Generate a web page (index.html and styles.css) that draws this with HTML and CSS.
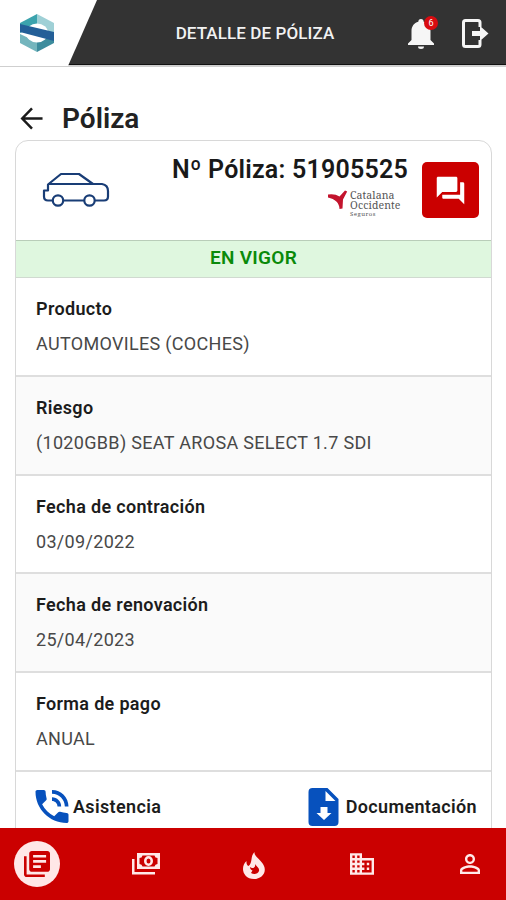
FILE: index.html
```html
<!DOCTYPE html>
<html lang="es">
<head>
<meta charset="utf-8">
<title>Detalle de póliza</title>
<link rel="stylesheet" href="styles.css">
</head>
<body>
<div class="app">
  <header class="topbar">
    <div class="brand">
      <svg class="logo" viewBox="0 0 34 38">
        <path fill="#3ba3ad" d="M17 0 0 9v10l17-7z"/>
        <path fill="#9fd0d6" d="M17 0l17 9v11L17 12z"/>
        <path fill="#74b5bd" d="M0 20l17 8v10L0 29z"/>
        <path fill="#3d8c9d" d="M34 19v10l-17 9V27z"/>
        <ellipse cx="17" cy="19" rx="11" ry="9.500" fill="#fff"/>
        <path fill="#235f98" d="M0 10l34 8v9L0 18z"/>
      </svg>
    </div>
    <h1 class="bar-title">DETALLE DE PÓLIZA</h1>
    <div class="bar-actions">
      <div class="bell">
        <svg viewBox="0 0 26 30"><path fill="#f6f6f6" d="M13 0c-1.700 0-2.700 1.200-2.700 2.800C6 4 3.500 7.500 3.500 12v9L0 24.500V26h26v-1.500L22.500 21v-9c0-4.500-2.500-8-6.800-9.200C15.700 1.200 14.700 0 13 0zM10 27.500h6a3 2.500 0 0 1-6 0z"/></svg>
        <span class="badge">6</span>
      </div>
      <svg class="exit" viewBox="0 0 27 29"><path fill="none" stroke="#f6f6f6" stroke-width="3" stroke-linejoin="round" d="M18 8V3.500Q18 1.500 16 1.500H3.500Q1.500 1.500 1.500 3.500v22q0 2 2 2H16q2 0 2-2V21"/><path fill="#f6f6f6" d="M10 12h8V7l8.500 7.500L18 22v-5h-8z"/></svg>
    </div>
  </header>

  <main class="content">
    <div class="heading">
      <svg class="back" viewBox="0 0 24 24"><path fill="none" stroke="#1b1b1b" stroke-width="2.600" d="M23 12H2M12 1.500 1.800 12 12 22.500"/></svg>
      <h2>Póliza</h2>
    </div>
    <section class="card">
      <div class="summary">
        <svg class="car" viewBox="0 0 68 36"><g fill="none" stroke="#193d76" stroke-width="2.200" stroke-linejoin="round"><path d="M11 28.500H6q-4 0-4-4v-6h4v-6L19 2h18l14 10h9q6 1 6 7v5.500q0 4-4 4h-9M21 28.500h22M6 12h46"/><circle cx="16" cy="28.500" r="5.200"/><circle cx="47.500" cy="28.500" r="5.200"/></g></svg>
        <div class="policy">
          <div class="number">Nº Póliza: 51905525</div>
          <div class="insurer">
            <svg viewBox="0 0 20 20"><path fill="#c3142d" d="M0 4.500q7-1 11.500 2L17 .5l2.200 1L15 9.500l-.5 9-3 .5C11.500 13 7 9 0 7.500z"/></svg>
            <div class="insurer-name"><span>Catalana</span><span>Occidente</span><small>Seguros</small></div>
          </div>
        </div>
        <div class="chat"><svg viewBox="0 0 24 24"><path fill="#fff" d="M21 6h-2v9H6v2c0 .55.45 1 1 1h11l4 4V7c0-.55-.45-1-1-1zm-4 6V3c0-.55-.45-1-1-1H3c-.55 0-1 .45-1 1v14l4-4h10c.55 0 1-.45 1-1z"/></svg></div>
      </div>
      <div class="status">EN VIGOR</div>
      <dl class="rows">
        <div class="row"><dt>Producto</dt><dd>AUTOMOVILES (COCHES)</dd></div>
        <div class="row"><dt>Riesgo</dt><dd>(1020GBB) SEAT AROSA SELECT 1.7 SDI</dd></div>
        <div class="row"><dt>Fecha de contración</dt><dd>03/09/2022</dd></div>
        <div class="row"><dt>Fecha de renovación</dt><dd>25/04/2023</dd></div>
        <div class="row"><dt>Forma de pago</dt><dd>ANUAL</dd></div>
      </dl>
      <div class="links">
        <div class="link assist"><svg viewBox="3 3 18 18"><path fill="#0751bd" d="M20 15.500c-1.250 0-2.450-.2-3.570-.57-.1-.03-.21-.05-.31-.05-.26 0-.51.1-.71.290l-2.200 2.200c-2.830-1.440-5.150-3.750-6.590-6.590l2.200-2.210c.28-.26.36-.65.25-1C8.700 6.450 8.500 5.250 8.500 4c0-.55-.45-1-1-1H4c-.55 0-1 .45-1 1 0 9.390 7.610 17 17 17 .55 0 1-.45 1-1v-3.500c0-.55-.45-1-1-1zM19 12h2c0-4.970-4.030-9-9-9v2c3.870 0 7 3.130 7 7zm-4 0h2c0-2.760-2.240-5-5-5v2c1.660 0 3 1.340 3 3z"/></svg><span>Asistencia</span></div>
        <div class="link docs"><svg viewBox="0 0 30 38"><path fill="#0751bd" fill-rule="evenodd" d="M4 0h15l11 11v23q0 4-4 4H4q-4 0-4-4V4q0-4 4-4zm13 3v10h10zM12 19v6H8l7.500 7 7.500-7h-4v-6z"/></svg><span>Documentación</span></div>
      </div>
    </section>
  </main>

  <nav class="tabs">
    <div class="tab active"><svg viewBox="2 2 20 20"><path d="M4 6H2v14c0 1.100.9 2 2 2h14v-2H4V6zm16-4H8c-1.100 0-2 .9-2 2v12c0 1.100.9 2 2 2h12c1.100 0 2-.9 2-2V4c0-1.100-.9-2-2-2zm-1 9H9V9h10v2zm-4 4H9v-2h6v2zm4-8H9V5h10v2z"/></svg></div>
    <div class="tab money"><svg viewBox="0 0 28 22"><path fill-rule="evenodd" d="M5 0h23v16H5zM7.500 5v6q2.500 0 3 2.500h12q.5-2.500 3-2.500V5q-2.500 0-3-2.500h-12Q10 5 7.500 5zM0 6h2.500v13H23v2.500H0z"/><path fill-rule="evenodd" d="M16.500 3a4.500 5 0 0 1 0 10 4.500 5 0 0 1 0-10zm0 2.500a2 2.500 0 0 0 0 5 2 2.500 0 0 0 0-5z"/></svg></div>
    <div class="tab fire"><svg viewBox="0 0 22 27"><path fill-rule="evenodd" d="M11.500 0C11 5 19 8 21 14c3 7-3 13-10 13C4 27 0 22 0 17c0-3 1-6 3.500-8-.2 3 .5 4 2 5C10 11 7 4 11.500 0zm.5 12c1 4-3 5-5 3 0 2 1 3 2.500 3.500L8 21c3 2 7 1 8-2 .7-3-2-4-4-7z"/></svg></div>
    <div class="tab building"><svg viewBox="2 3 20 18"><path d="M12 7V3H2v18h20V7H12zM6 19H4v-2h2v2zm0-4H4v-2h2v2zm0-4H4V9h2v2zm0-4H4V5h2v2zm4 12H8v-2h2v2zm0-4H8v-2h2v2zm0-4H8V9h2v2zm0-4H8V5h2v2zm10 12h-8v-2h2v-2h-2v-2h2v-2h-2V9h8v10zm-2-8h-2v2h2v-2zm0 4h-2v2h2v-2z"/></svg></div>
    <div class="tab person"><svg viewBox="4 4 16 16"><path d="M12 5.900a2.100 2.100 0 1 1 0 4.200 2.100 2.100 0 0 1 0-4.200m0 9c2.970 0 6.100 1.460 6.100 2.100v1.100H5.900V17c0-.64 3.130-2.100 6.100-2.100M12 4C9.790 4 8 5.790 8 8s1.790 4 4 4 4-1.790 4-4-1.790-4-4-4zm0 9c-2.670 0-8 1.340-8 4v3h16v-3c0-2.660-5.330-4-8-4z"/></svg></div>
  </nav>
</div>
</body>
</html>
```
FILE: styles.css
```css
* { box-sizing: border-box; }
body { margin: 0; background: #fff; font-family: Roboto, "Liberation Sans", sans-serif; color: #202020; }
h1, h2, dl, dt, dd { margin: 0; }
svg { display: block; flex: none; }
.app { width: 506px; height: 900px; display: flex; flex-direction: column; overflow: hidden; }
.topbar { flex: none; height: 67px; display: grid; grid-template-columns: 97px 1fr 97px; align-items: start; background: #333; border-bottom: 2px solid #cfcfcf; box-shadow: inset 0 -1px #111; }
.brand { height: 66px; background: #fff; clip-path: polygon(0 0, 100% 0, 68px 100%, 0 100%); padding: 14px 0 0 20px; }
.logo { width: 34px; height: 38px; }
.bar-title { text-align: center; font-size: 17px; font-weight: 500; line-height: 67px; color: #f2f2f2; letter-spacing: .1px; padding-left: 4px; }
.bar-actions { display: flex; gap: 28px; padding-top: 19px; margin-left: -1px; }
.bell { position: relative; width: 26px; }
.bell svg { width: 26px; height: 30px; }
.badge { position: absolute; left: 16px; top: -3px; width: 14px; height: 14px; border-radius: 50%; background: #d90b10; color: #fff; font-size: 9px; line-height: 14px; text-align: center; }
.exit { width: 27px; height: 29px; }
.content { flex: 1; min-height: 0; padding: 33px 14px 0 15px; overflow: hidden; }
.heading { display: flex; align-items: center; height: 40px; gap: 18px; padding-left: 5px; }
.back { width: 24px; height: 23px; margin-top: -3px; }
.heading h2 { font-size: 28px; font-weight: 600; line-height: 36px; color: #222; margin-top: -3px; }
.card { border: 1px solid #d8d8d8; border-radius: 13px 13px 0 0; overflow: hidden; }
.summary { display: flex; height: 99px; padding: 0 12px 0 26px; }
.car { width: 68px; height: 36px; margin-top: 31px; }
.policy { flex: 1; display: flex; flex-direction: column; align-items: flex-end; margin-right: 14px; padding-top: 13px; }
.number { font-size: 25px; font-weight: 600; line-height: 32px; white-space: nowrap; color: #191919; letter-spacing: .22px; }
.insurer { display: flex; gap: 2px; margin: 4px 7px 0 0; }
.insurer svg { width: 20px; height: 20px; }
.insurer-name { font-family: "Noto Serif", "DejaVu Serif", "Liberation Serif", serif; color: #555; width: 51px; }
.insurer-name span { display: block; height: 10px; font-size: 10.500px; line-height: 10px; letter-spacing: .1px; }
.insurer-name small { display: block; font-size: 6px; line-height: 8px; letter-spacing: .5px; }
.chat { width: 57px; height: 56px; margin-top: 21px; background: #cb0000; border-radius: 5px; display: grid; place-items: center; }
.chat svg { width: 33px; height: 33px; }
.status { height: 38px; border-top: 1px solid #b9cdb9; border-bottom: 1px solid #d0dad0; background: #dff7df; color: #0a8a0a; font-size: 19px; font-weight: 600; line-height: 34px; text-align: center; letter-spacing: .3px; }
.row { height: 98.800px; padding: 19px 20px 0; border-bottom: 2px solid #dedede; }
.row:nth-child(even) { background: #fafafa; }
dt { font-size: 18px; font-weight: 600; line-height: 24px; letter-spacing: .33px; color: #1c1c1c; }
dd { font-size: 18px; line-height: 24px; margin-top: 11px; letter-spacing: .32px; color: #484848; }
.links { display: flex; justify-content: space-between; height: 60px; padding: 16px 14px 0 19px; }
.link { display: flex; align-items: center; height: 38px; font-size: 18px; font-weight: 600; letter-spacing: .35px; color: #1c1c1c; }
.assist { gap: 4px; }
.assist svg { width: 34px; height: 33px; }
.docs { gap: 7px; }
.docs svg { width: 31px; height: 38px; }
.tabs { flex: none; height: 72px; background: #cb0000; display: grid; grid-template-columns: 92px 108px 108px 108px 1fr; justify-items: center; align-items: center; }
.tab svg { fill: #ffe9e9; }
.active { width: 46px; height: 46px; border-radius: 50%; background: #ffe7e7; display: grid; place-items: center; justify-self: start; margin-left: 14px; }
.active svg { width: 26px; height: 26px; fill: #cb0000; }
.money svg { width: 28px; height: 22px; }
.fire { margin-top: 2px; }
.fire svg { width: 22px; height: 27px; }
.building svg { width: 24px; height: 22px; }
.person { justify-self: end; margin-right: 26px; }
.person svg { width: 20px; height: 20px; }
```
